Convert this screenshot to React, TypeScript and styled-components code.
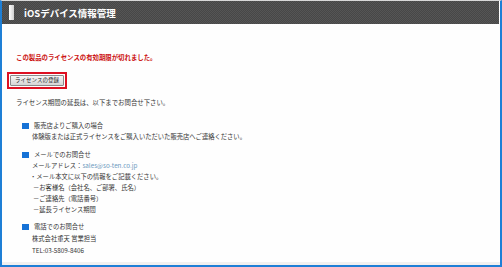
import React from 'react';
import styled, { createGlobalStyle } from 'styled-components';

const GlobalStyle = createGlobalStyle`
  body {
    margin: 0;
    background: #ffffff;
    font-family: "Noto Sans CJK JP", "DejaVu Sans", sans-serif;
  }
`;

const Frame = styled.div`
  box-sizing: border-box;
  width: 502px;
  height: 267px;
  border: 2px solid #1e7fd6;
  border-top: 1px solid #d8d8d8;
  background: #fefefe;
  display: flex;
  flex-direction: column;
  overflow: hidden;
`;

const Header = styled.div`
  height: 23px;
  margin-right: 1px;
  display: flex;
  align-items: center;
  gap: 10px;
  padding-left: 7px;
  background-color: #4c4c4c;
  background-image: repeating-conic-gradient(#555555 0 25%, #474747 0 50%);
  background-size: 2px 2px;
`;

const HeaderMark = styled.span`
  width: 5px;
  height: 15px;
  background: linear-gradient(90deg, #ffffff, #cfcfcf);
`;

const HeaderTitle = styled.h1`
  margin: 0;
  color: #ffffff;
  font-size: 9.5px;
  font-weight: 700;
`;

const Body = styled.div`
  flex: 1;
  padding: 28px 0 0 14px;
  display: flex;
  flex-direction: column;
  font-size: 6.3px;
  color: #333333;
  line-height: 11px;
`;

const Alert = styled.p`
  margin: 0;
  color: #cc1111;
  font-size: 6.4px;
  font-weight: 700;
`;

const ButtonHighlight = styled.div`
  align-self: flex-start;
  margin: 9px 0 0 -9px;
  padding: 1px;
  border: 2px solid #dd1122;
  display: flex;
`;

const RegisterButton = styled.button`
  font-family: inherit;
  font-size: 5.5px;
  color: #222222;
  height: 11px;
  padding: 0 4px;
  line-height: 9px;
  border: 1px solid #8a8a8a;
  border-radius: 1px;
  background: linear-gradient(#f6f6f6, #d6d6d6);
`;

const Lead = styled.p`
  margin: 8px 0 0;
  font-size: 6.4px;
`;

const Section = styled.section<{ $gap: number; $lh?: number }>`
  margin-top: ${(p) => p.$gap}px;
  padding-left: 6px;
  line-height: ${(p) => p.$lh ?? 11}px;
`;

const SectionTitle = styled.div`
  display: flex;
  align-items: center;
  gap: 5px;
`;

const Square = styled.span`
  width: 7px;
  height: 6px;
  background: #1672d6;
`;

const Line = styled.div<{ $indent?: number }>`
  padding-left: ${(p) => 10 + (p.$indent ?? 0)}px;
`;

const MailLink = styled.span`
  color: #6f9bbf;
`;

const Footer = styled.div`
  height: 3px;
  background: #f0f0f0;
`;

const App = () => (
  <>
    <GlobalStyle />
    <Frame>
      <Header>
        <HeaderMark />
        <HeaderTitle>iOSデバイス情報管理</HeaderTitle>
      </Header>
      <Body>
        <Alert>この製品のライセンスの有効期限が切れました。</Alert>
        <ButtonHighlight>
          <RegisterButton>ライセンスの登録</RegisterButton>
        </ButtonHighlight>
        <Lead>ライセンス期間の延長は、以下までお問合せ下さい。</Lead>

        <Section $gap={12}>
          <SectionTitle>
            <Square />
            販売店よりご購入の場合
          </SectionTitle>
          <Line>体験版または正式ライセンスをご購入いただいた販売店へご連絡ください。</Line>
        </Section>

        <Section $gap={7}>
          <SectionTitle>
            <Square />
            メールでのお問合せ
          </SectionTitle>
          <Line>
            メールアドレス：<MailLink>sales@so-ten.co.jp</MailLink>
          </Line>
          <Line $indent={-2}>・メール本文に以下の情報をご記載ください。</Line>
          <Line $indent={1}>－お客様名（会社名、ご部署、氏名）</Line>
          <Line $indent={1}>－ご連絡先（電話番号）</Line>
          <Line $indent={1}>－延長ライセンス期間</Line>
        </Section>

        <Section $gap={6} $lh={12}>
          <SectionTitle>
            <Square />
            電話でのお問合せ
          </SectionTitle>
          <Line>株式会社重天 営業担当</Line>
          <Line>TEL:03-5809-8406</Line>
        </Section>
      </Body>
      <Footer />
    </Frame>
  </>
);

export default App;
